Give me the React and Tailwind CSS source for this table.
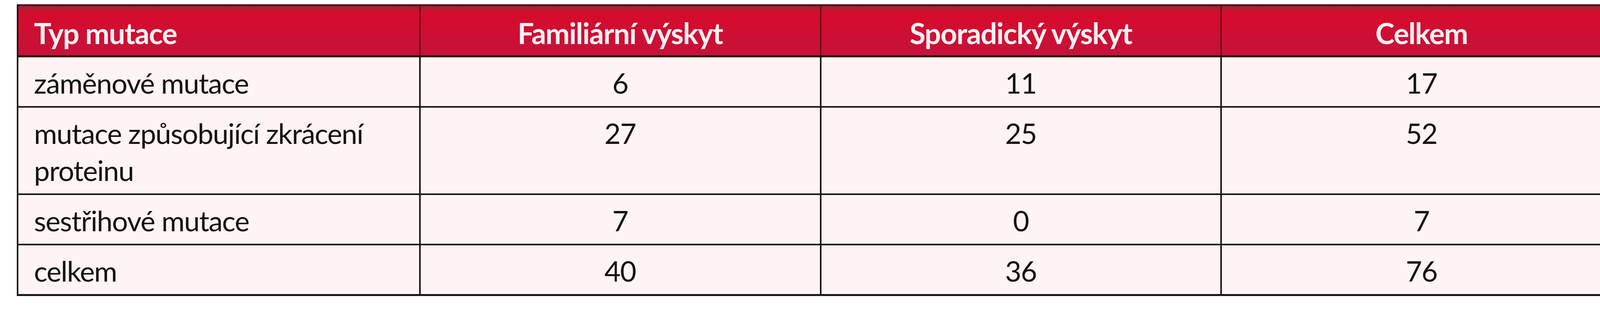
const HEADERS = ["Typ mutace", "Familiární výskyt", "Sporadický výskyt", "Celkem"];

const ROWS = [
  ["záměnové mutace", "6", "11", "17"],
  ["mutace způsobující zkrácení proteinu", "27", "25", "52"],
  ["sestřihové mutace", "7", "0", "7"],
  ["celkem", "40", "36", "76"],
];

export default function App() {
  return (
    <div className="h-[800px] w-[4219px] bg-white pl-[43px] pt-[11px] font-['Lato',sans-serif]">
      <div className="w-[4111px] border-x-[4px] border-b-[5px] border-[#1a1414]">
        {/* header */}
        <div className="grid grid-cols-4 border-t-[4px] border-b-[5px] border-t-[#4a0612] border-b-[#2a0607] bg-linear-to-b from-[#a11d38] via-[#d70a2b] via-15% to-[#c5123a] text-[74px] font-bold leading-[95px] tracking-[-0.02em] text-[#fff0f2]">
          {HEADERS.map((h, i) => (
            <div
              key={h}
              className={`pb-[10px] pt-[22px] ${
                i === 0 ? "pl-[40px] text-left" : "border-l-[4px] border-[#6e0a18] text-center"
              }`}
            >
              {h}
            </div>
          ))}
        </div>

        {/* body */}
        {ROWS.map((row, r) => (
          <div
            key={row[0]}
            className={`grid grid-cols-4 bg-[#fdf4f3] text-[72px] leading-[95px] tracking-[-0.02em] text-[#151111] ${
              r > 0 ? "border-t-[4px] border-[#1a1414]" : ""
            }`}
          >
            {row.map((cell, i) => (
              <div
                key={i}
                className={`pb-[12px] pt-[18px] ${
                  i === 0 ? "pl-[40px] pr-[60px] text-left" : "border-l-[4px] border-[#1a1414] text-center"
                }`}
              >
                {cell}
              </div>
            ))}
          </div>
        ))}
      </div>
    </div>
  );
}
